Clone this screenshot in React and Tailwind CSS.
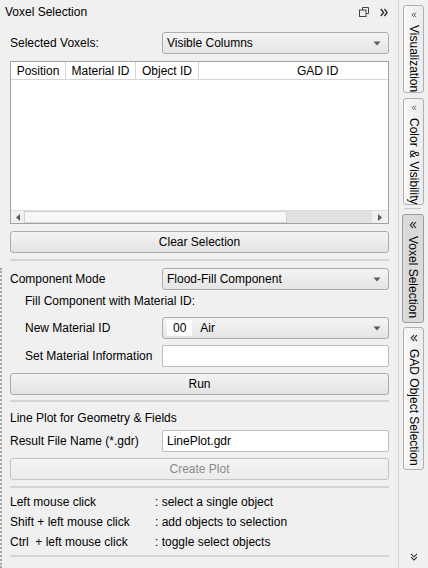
import React from "react";

const FONT = "font-['Liberation_Sans',Arial,sans-serif]";

function DownTriangle() {
  return (
    <svg width="8" height="5" viewBox="0 0 8 5">
      <path d="M0.5 0.5 H7.5 L4 4.5 Z" fill="#5a5a5a" />
    </svg>
  );
}

function ChevronsLeft() {
  return (
    <svg width="8" height="8" viewBox="0 0 8 8" fill="none" stroke="#3a3a3a" strokeWidth="1.1">
      <path d="M4 1 L1.2 4 L4 7 M7 1 L4.2 4 L7 7" />
    </svg>
  );
}

function ChevronsDown() {
  return (
    <svg width="8" height="8" viewBox="0 0 8 8" fill="none" stroke="#3a3a3a" strokeWidth="1.1">
      <path d="M1 1 L4 3.8 L7 1 M1 4.2 L4 7 L7 4.2" />
    </svg>
  );
}

function Combo({ children }) {
  return (
    <div className="flex h-[22px] w-[227px] items-center justify-between rounded-[3px] border border-[#acacac] bg-gradient-to-b from-[#f4f4f4] to-[#e5e5e5] pl-[4px] pr-[7px]">
      <div className="flex items-center">{children}</div>
      <DownTriangle />
    </div>
  );
}

function LineEdit({ value }) {
  return (
    <div className="flex h-[22px] w-[227px] items-center rounded-[2px] border border-[#bdbdbd] bg-white pl-[4px]">
      {value}
    </div>
  );
}

function Button({ children, disabled }) {
  return (
    <div
      className={
        "flex h-[22px] w-full items-center justify-center rounded-[3px] border bg-gradient-to-b " +
        (disabled
          ? "border-[#c4c4c4] from-[#f4f4f4] to-[#ececec] text-[#8b8b8b]"
          : "border-[#acacac] from-[#f4f4f4] to-[#e3e3e3]")
      }
    >
      {children}
    </div>
  );
}

function Separator({ className }) {
  return <div className={"h-[2px] w-full bg-[#d4d4d4] " + className} />;
}

function Row({ label, indent, children, className }) {
  return (
    <div className={"flex items-center " + className}>
      <div className={indent ? "w-[152px] pl-[15px]" : "w-[152px]"}>{label}</div>
      {children}
    </div>
  );
}

function Tab({ label, selected, className }) {
  return (
    <div
      className={
        "flex flex-col items-center rounded-[3px] border pt-[6px] " +
        (selected
          ? "ml-[3px] w-[22px] border-[#9c9c9c] bg-[#dadada]"
          : "ml-[4px] w-[21px] border-[#b0b0b0] bg-gradient-to-r from-[#f8f8f8] to-[#ececec]") +
        " " +
        className
      }
    >
      <ChevronsLeft />
      <span className="mt-[7px] whitespace-nowrap leading-[18px] [writing-mode:vertical-rl]">{label}</span>
    </div>
  );
}

export default function App() {
  const hints = [
    ["Left mouse click", ": select a single object"],
    ["Shift + left mouse click", ": add objects to selection"],
    ["Ctrl  + left mouse click", ": toggle select objects"],
  ];

  return (
    <div className={"flex h-[568px] w-[428px] overflow-hidden bg-[#f0f0f0] text-[12px] text-black " + FONT}>
      {/* main dock panel */}
      <div className="flex w-[399px] flex-col border-r border-[#d6d6d6]">
        <div className="flex h-[24px] items-center justify-between pl-[5px] pr-[10px]">
          <span>Voxel Selection</span>
          <div className="flex items-center gap-[11px]">
            <svg width="10" height="10" viewBox="0 0 10 10" fill="none" stroke="#444" strokeWidth="1">
              <path d="M3.5 3 V0.5 H9.5 V6.5 H7" />
              <rect x="0.5" y="3" width="6.5" height="6.5" />
            </svg>
            <svg width="8" height="9" viewBox="0 0 8 9" fill="none" stroke="#333" strokeWidth="1.4">
              <path d="M0.8 1 L3.6 4.5 L0.8 8 M4.4 1 L7.2 4.5 L4.4 8" />
            </svg>
          </div>
        </div>

        <div className="flex flex-col pl-[10px] pr-[9px]">
          <Row label="Selected Voxels:" className="mt-[8px]">
            <Combo>Visible Columns</Combo>
          </Row>

          <div className="mt-[7px] flex h-[163px] flex-col border border-[#a3a3a3] bg-white">
            <div className="flex h-[18px] border-b border-[#d5d5d5]">
              <div className="flex w-[55px] items-center justify-center border-r border-[#d5d5d5]">Position</div>
              <div className="flex w-[70px] items-center justify-center border-r border-[#d5d5d5]">Material ID</div>
              <div className="flex w-[63px] items-center justify-center border-r border-[#d5d5d5]">Object ID</div>
              <div className="flex flex-1 items-center pl-[98px]">GAD ID</div>
            </div>
            <div className="flex-1" />
            <div className="flex h-[13px] border-t border-[#dcdcdc] bg-[#f0f0f0]">
              <div className="flex w-[13px] items-center justify-center">
                <svg width="4" height="7" viewBox="0 0 4 7">
                  <path d="M4 0 V7 L0 3.5 Z" fill="#5a5a5a" />
                </svg>
              </div>
              <div className="w-[263px] border border-[#d2d2d2] bg-[#f7f7f7]" />
              <div className="flex-1 bg-[#e2e2e2]" />
              <div className="flex w-[16px] items-center justify-center">
                <svg width="4" height="7" viewBox="0 0 4 7">
                  <path d="M0 0 V7 L4 3.5 Z" fill="#5a5a5a" />
                </svg>
              </div>
            </div>
          </div>

          <div className="mt-[7px]">
            <Button>Clear Selection</Button>
          </div>
          <Separator className="mt-[6px]" />
        </div>

        <div className="mt-[7px] flex flex-1 flex-col border-l-2 border-dotted border-[#a5a5a5] pl-[8px] pr-[9px]">
          <Row label="Component Mode">
            <Combo>Flood-Fill Component</Combo>
          </Row>
          <div className="flex h-[22px] items-center pl-[15px]">Fill Component with Material ID:</div>
          <Row label="New Material ID" indent className="mt-[5px]">
            <Combo>
              <span className="mr-[8px] flex h-[16px] items-center bg-white px-[6px]">00</span>
              <span>Air</span>
            </Combo>
          </Row>
          <Row label="Set Material Information" indent className="mt-[6px]">
            <LineEdit value="" />
          </Row>
          <div className="mt-[6px]">
            <Button>Run</Button>
          </div>
          <Separator className="mt-[5px]" />

          <div className="mt-[5px] flex h-[22px] items-center">Line Plot for Geometry &amp; Fields</div>
          <Row label="Result File Name (*.gdr)" className="mt-[1px]">
            <LineEdit value="LinePlot.gdr" />
          </Row>
          <div className="mt-[6px]">
            <Button disabled>Create Plot</Button>
          </div>
          <Separator className="mt-[6px]" />

          <div className="mt-[4px] flex flex-col">
            {hints.map(([a, b]) => (
              <div key={a} className="flex h-[20px] items-center">
                <span className="w-[145px] whitespace-pre">{a}</span>
                <span>{b}</span>
              </div>
            ))}
          </div>
          <Separator className="mt-[3px]" />
        </div>
      </div>

      {/* side tab bar */}
      <div className="flex flex-1 flex-col pt-[5px]">
        <Tab label="Visualization" className="h-[88px]" />
        <Tab label="Color & Visibility" className="mt-[5px] h-[107px]" />
        <div className="ml-[5px] mt-[3px] h-[1px] w-[17px] bg-[#c8c8c8]" />
        <Tab label="Voxel Selection" selected className="mt-[5px] h-[109px]" />
        <Tab label="GAD Object Selection" className="mt-[4px] h-[143px]" />
        <div className="flex flex-1 items-end justify-center pb-[7px] pl-[1px]">
          <ChevronsDown />
        </div>
      </div>
    </div>
  );
}
